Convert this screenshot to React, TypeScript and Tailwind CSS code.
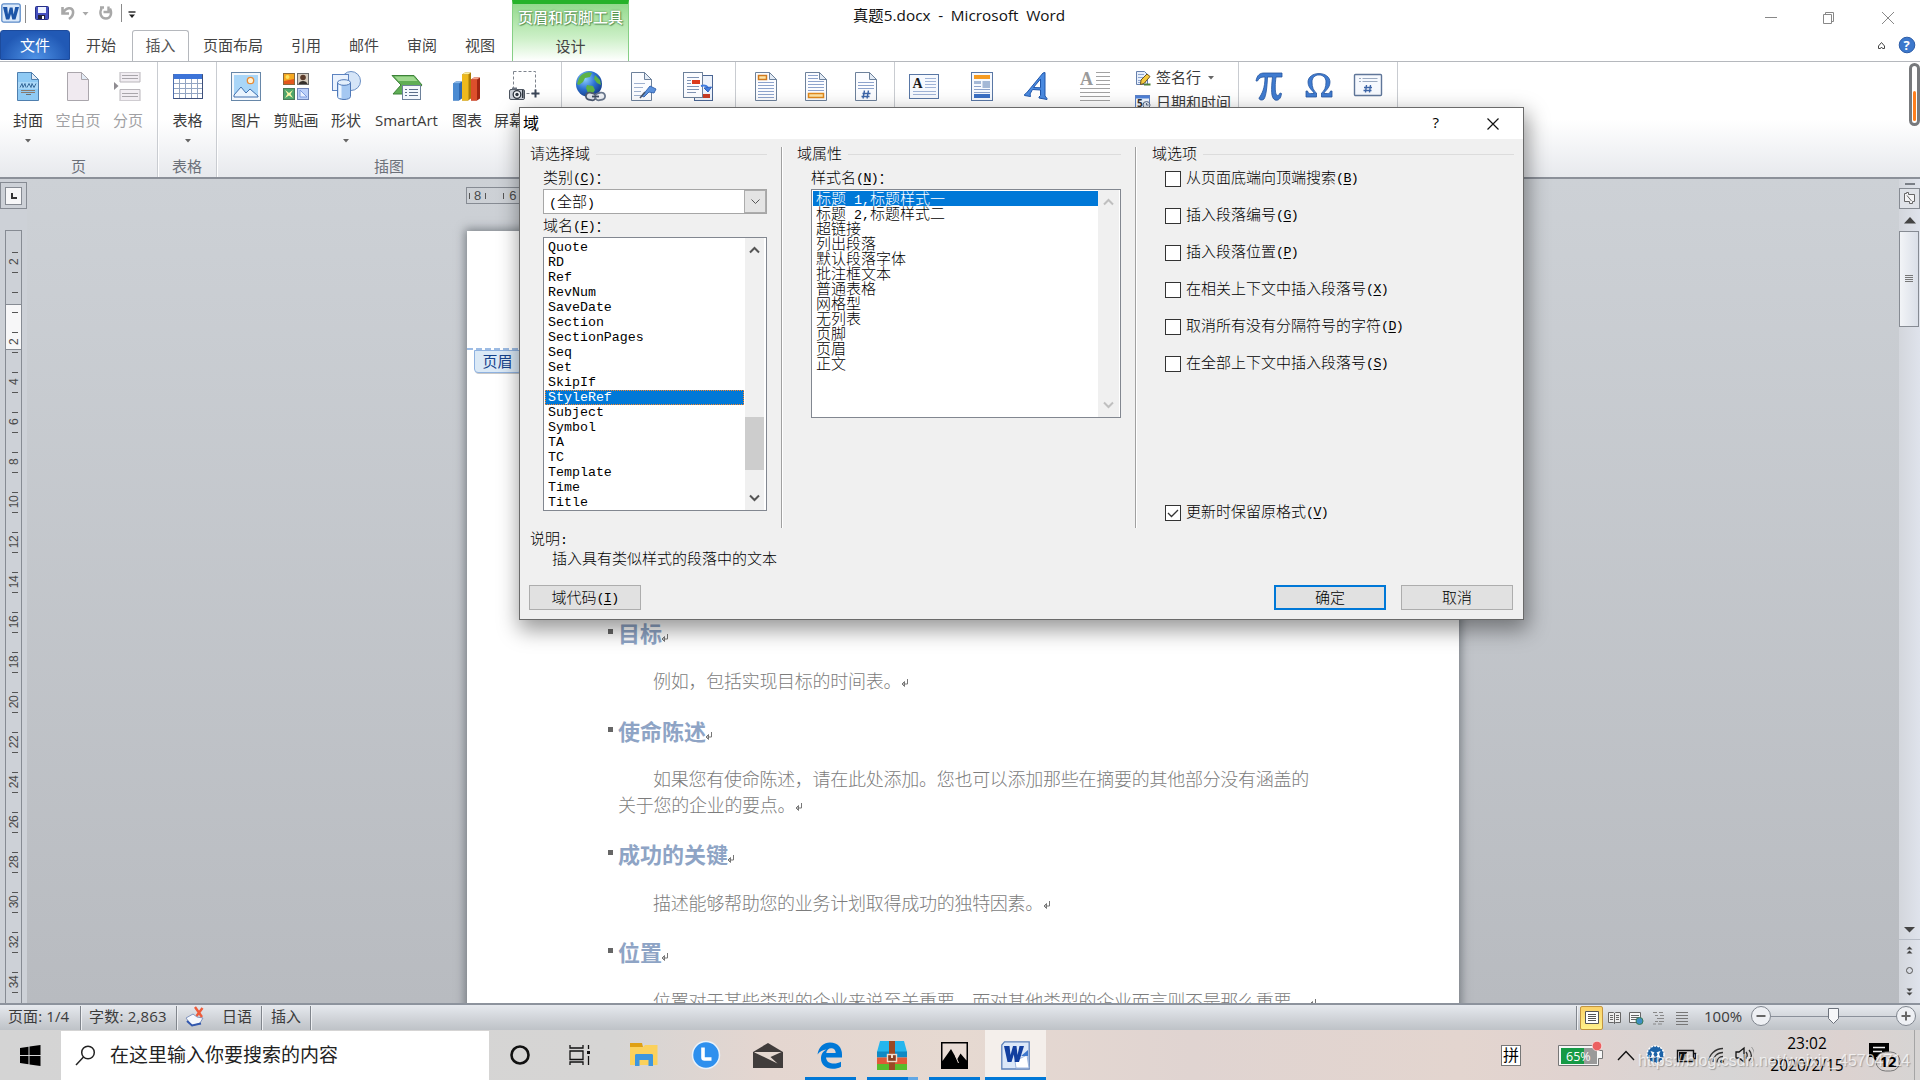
import React from "react";

const ui = "font-['Open_Sans','Noto_Sans_CJK_SC',sans-serif]";
const song = "font-['Noto_Sans_CJK_SC',sans-serif]";

/* ---------- ribbon icons (32 x 32) ---------- */

const Svg = ({ children, w = 32, h = 32, vb }: { children: React.ReactNode; w?: number; h?: number; vb?: string }) => (
  <svg width={w} height={h} viewBox={vb ?? `0 0 ${w} ${h}`} fill="none" className="shrink-0">
    {children}
  </svg>
);

const Sheet = ({ fill = "#fbfcff", stroke = "#6d819b" }: { fill?: string; stroke?: string }) => (
  <>
    <path d="M5.500 2.500h14l7 7v21h-21z" fill={fill} stroke={stroke} />
    <path d="M19.500 2.500v7h7z" fill="#e3ebf5" stroke={stroke} />
  </>
);

const CoverIcon = () => (
  <Svg>
    <Sheet fill="#8fcaf4" stroke="#4f7fae" />
    <rect x="6" y="12" width="20" height="7" fill="#a9d8f8" />
    <path d="M8 17.500l2-4 1 4 2-4 1 4M15 17.500l2-4 2 4 1-4 2 4 2-4" stroke="#3a6c9c" />
    <path d="M9 20.500h14M9 22.500h14" stroke="#8a7a6e" />
    <path d="M14 24.500h5" stroke="#6d6d6d" />
  </Svg>
);

const BlankIcon = () => (
  <Svg>
    <Sheet fill="#f0eaf0" stroke="#aaa6ac" />
  </Svg>
);

const BreakIcon = () => (
  <Svg>
    <path d="M8 2v10h20V2M8 31V19.500h20V31" fill="#f1edf2" stroke="#b9b6bb" />
    <path d="M8 2.500h20M8 30.500h20" stroke="#cfccd1" />
    <path d="M10 5.500h16M10 8.500h16M10 23.500h16M10 26.500h16" stroke="#a9a6ab" />
    <path d="M2 12l4.500 4L2 20z" fill="#8f8c91" />
  </Svg>
);

const TableIcon = () => (
  <Svg>
    <rect x="1.500" y="4.500" width="29" height="24" fill="#fff" stroke="#4f6fae" />
    <rect x="2" y="4" width="28" height="5" fill="#3c74d8" />
    <path d="M2 13.500h28M2 18.500h28M2 23.500h28M7.500 9v19M13.500 9v19M19.500 9v19M25.500 9v19" stroke="#93a5c2" />
    <path d="M1.500 28.500h29v-24" stroke="#3d4f7a" />
  </Svg>
);

const PictureIcon = () => (
  <Svg>
    <rect x="1.500" y="2.500" width="29" height="28" fill="#f4f8fc" stroke="#6787a8" />
    <rect x="4" y="5" width="24" height="22" fill="#a9d6f8" />
    <circle cx="20.500" cy="10.500" r="3.200" fill="#fff5d8" stroke="#e88b36" strokeWidth="1.300" />
    <path d="M4 25l7-8 5 6 4-4 8 7v1H4z" fill="#eaf4fd" stroke="#3f6fae" />
  </Svg>
);

const ClipArtIcon = () => (
  <Svg>
    <rect x="3.500" y="3.500" width="11" height="11" fill="#f6a821" stroke="#8a6a3c" />
    <path d="M4 11l10-2v5H4z" fill="#e2571d" />
    <circle cx="7.500" cy="7" r="2" fill="#ffe25e" />
    <rect x="17.500" y="3.500" width="11" height="11" fill="#d7cdbf" stroke="#6b6b6b" />
    <circle cx="23" cy="7.500" r="2.800" fill="#5d3d2c" />
    <path d="M18.500 14c1-4 8-4 9 0z" fill="#36302c" />
    <rect x="3.500" y="18.500" width="11" height="11" fill="#4fa66c" stroke="#4a7a57" />
    <path d="M5 20l4 3 4-3-2.500 4 2.500 4-4-2.500L5 28l2.500-4z" fill="#fff7a8" />
    <rect x="17.500" y="18.500" width="11" height="11" fill="#bcd0fa" stroke="#6f84b8" />
    <path d="M20 20l7 7h-7z" fill="#eaf1ff" stroke="#7e9be0" />
  </Svg>
);

const ShapesIcon = () => (
  <Svg>
    <circle cx="21" cy="11" r="9.500" fill="#d5e5f8" stroke="#6a8fc4" />
    <rect x="2.500" y="4.500" width="16" height="16" fill="#eaf2fd" stroke="#5d83c0" />
    <path d="M7.500 12.500v14c0 4 13 4 13 0v-14z" fill="#a5c8f2" stroke="#5079b8" />
    <path d="M10 14v14" stroke="#eef6ff" strokeWidth="3" />
    <ellipse cx="14" cy="12.500" rx="6.500" ry="2.800" fill="#e3effc" stroke="#5079b8" />
  </Svg>
);

const SmartArtIcon = () => (
  <Svg>
    <path d="M1 5.500h22l8 9.500-8 9H2l8-9z" fill="#5fae55" stroke="#3d8139" />
    <path d="M3.500 6.500h19l4 4.500H7.500z" fill="#9fd890" />
    <rect x="11.500" y="15.500" width="18" height="14" fill="#f4f8fd" stroke="#6d819b" />
    <path d="M14 19.500h2M14 22.500h2M14 25.500h2M18 19.500h9M18 22.500h9M18 25.500h9" stroke="#5c6f8a" />
  </Svg>
);

const ChartIcon = () => (
  <Svg>
    <path d="M2 13.500l3-2h6v17l-3 2H2z" fill="#2f68b0" />
    <path d="M2 13.500l3-2h6l-3 2z" fill="#8ab9ea" />
    <rect x="2" y="13.500" width="6" height="17" fill="#4b8bd2" />
    <path d="M11 4.500l3-2h6v26l-3 2h-6z" fill="#a87a08" />
    <path d="M11 4.500l3-2h6l-3 2z" fill="#fdf0a0" />
    <rect x="11" y="4.500" width="6.500" height="26" fill="#eeb91c" />
    <path d="M20 9.500l3-2h6v21l-3 2h-6z" fill="#9e2612" />
    <path d="M20 9.500l3-2h6l-3 2z" fill="#f8a58c" />
    <rect x="20" y="9.500" width="6" height="21" fill="#dd4f2c" />
  </Svg>
);

const ScreenshotIcon = () => (
  <Svg>
    <rect x="5.500" y="1.500" width="22" height="22" stroke="#7d838c" strokeDasharray="3 2" />
    <path d="M23.500 23.500h8M27.500 19.500v8" stroke="#3b4658" strokeWidth="2" />
    <rect x="1.500" y="19.500" width="15" height="10" rx="1.500" fill="#c9ced6" stroke="#4d545f" />
    <rect x="4" y="17.500" width="5" height="2" fill="#6d7480" />
    <circle cx="9" cy="24.500" r="3.800" fill="#f3f5f8" stroke="#2f3640" strokeWidth="1.300" />
    <circle cx="9" cy="24.500" r="1.700" fill="#2f3640" />
    <rect x="14" y="20" width="1.500" height="8" fill="#2f3640" />
  </Svg>
);

const GlobeIcon = () => (
  <Svg>
    <defs>
      <radialGradient id="sea" cx="0.35" cy="0.3" r="0.8">
        <stop offset="0" stopColor="#8fd0ff" />
        <stop offset="0.5" stopColor="#2d72d2" />
        <stop offset="1" stopColor="#11357e" />
      </radialGradient>
    </defs>
    <circle cx="14" cy="14" r="13" fill="url(#sea)" />
    <path d="M4 8c3-5 9-7 13-5l-2 4-5 1-2 4-4 3-2-1zM12 15l6 1 2 4-4 6-3-3-2-5zM20 5l5 5 1 5-4-2-3-4z" fill="#5cb247" />
    <rect x="11" y="23" width="10" height="7" rx="3.500" fill="#dfe4ec" stroke="#4d5a70" strokeWidth="1.800" transform="rotate(14 16 26)" />
    <rect x="20" y="23" width="10" height="7" rx="3.500" fill="#eef1f5" stroke="#6a788e" strokeWidth="1.800" transform="rotate(-14 25 26)" />
    <path d="M17 26.500h7" stroke="#3f4c61" strokeWidth="1.800" />
  </Svg>
);

const BookmarkIcon = () => (
  <Svg>
    <path d="M4.500 2.500h13l7 7v21h-20z" fill="#fbfcff" stroke="#6d819b" />
    <path d="M17.500 2.500v7h7z" fill="#e3ebf5" stroke="#6d819b" />
    <path d="M7 13.500h11M7 17.500h9M7 21.500h7M7 25.500h10" stroke="#9fb1cf" />
    <path d="M15 26l8-10 6 3-2 4-5-1-5 5z" fill="#5c92dd" stroke="#3a69b4" />
    <path d="M13 28l5-6" stroke="#49566d" strokeWidth="1.500" />
  </Svg>
);

const CrossRefIcon = () => (
  <Svg>
    <rect x="12.500" y="5.500" width="18" height="25" fill="#eef3fb" stroke="#4b6694" />
    <rect x="1.500" y="2.500" width="19" height="25" fill="#fbfcff" stroke="#6d819b" />
    <path d="M5 7.500h12M5 10.500h4M5 13.500h4M5 16.500h12M5 19.500h12M5 22.500h9" stroke="#8094b4" />
    <rect x="10" y="10" width="8" height="4" fill="#dc3b1c" />
    <rect x="21" y="24" width="7" height="4" fill="#c83b22" />
    <path d="M19 16c4-1 7 0 7 3" stroke="#3f7ce0" strokeWidth="2" />
    <path d="M22 18l4 4 3.500-5z" fill="#3f7ce0" stroke="#2f62c0" />
  </Svg>
);

const HeaderIcon = () => (
  <Svg>
    <Sheet />
    <path d="M8 12.500h16M8 15.500h16M8 18.500h16M8 21.500h16M8 24.500h16M8 27.500h16" stroke="#8da3cc" />
    <rect x="8.500" y="5.500" width="8" height="4" fill="#fde3a6" stroke="#d07a1e" strokeWidth="1.500" />
  </Svg>
);

const FooterIcon = () => (
  <Svg>
    <Sheet />
    <path d="M8 5.500h10M8 8.500h10M8 11.500h16M8 14.500h16M8 17.500h16M8 20.500h16" stroke="#8da3cc" />
    <rect x="8.500" y="23.500" width="15" height="4" fill="#fde3a6" stroke="#e0891e" strokeWidth="1.500" />
  </Svg>
);

const PageNoIcon = () => (
  <Svg>
    <Sheet />
    <path d="M8 12.500h16M8 15.500h16M8 18.500h16" stroke="#8da3cc" />
    <path d="M14.500 20.500l-1.500 8M18.500 20.500l-1.500 8M12.500 23.500h8M11.500 26.500h8" stroke="#3e66a8" strokeWidth="1.400" />
  </Svg>
);

const TextBoxIcon = () => (
  <Svg>
    <rect x="1.500" y="4.500" width="29" height="24" fill="#f6f9fe" stroke="#5977a5" />
    <text x="4.500" y="18" className="font-['Liberation_Serif',serif] font-bold" fontSize="14" fill="#1a1a1a">A</text>
    <path d="M17 8.500h11M17 11.500h11M17 14.500h11M17 17.500h11M5 21.500h23M5 24.500h23" stroke="#9fb3d6" />
  </Svg>
);

const PartsIcon = () => (
  <Svg>
    <rect x="5.500" y="2.500" width="21" height="28" fill="#f6f9fe" stroke="#5977a5" />
    <rect x="8" y="5" width="16" height="4" fill="#f59b22" />
    <rect x="8" y="11" width="7" height="3" fill="#a4b8d6" />
    <rect x="16.500" y="11" width="7.500" height="7" fill="#a4b8d6" />
    <path d="M8 16.500h7M8 19.500h16M8 22.500h16" stroke="#8da3cc" />
    <rect x="8" y="24" width="16" height="4" fill="#3a6fc4" />
  </Svg>
);

const WordArtIcon = () => (
  <Svg>
    <path d="M24 2.500v23.500l2 2.500v1l-8-1.500v-1l1.500-1.500V20l-8-.5-2.500 4.500.5 1.500v1l-6-1v-1l2-1.500L22 3zM19.500 9l-7 8.500 7 .3z" fill="#4a8ae0" stroke="#1f56ab" />
  </Svg>
);

const DropCapIcon = () => (
  <Svg>
    <text x="1" y="15" className="font-['Liberation_Serif',serif] font-bold" fontSize="18" fill="#9a9a9a">A</text>
    <path d="M17 2.500h14M17 6.500h14M17 10.500h14M17 14.500h14M1 18.500h30M1 22.500h30M1 26.500h30M1 30.500h30" stroke="#a2a2a2" />
  </Svg>
);

const FieldBoxIcon = () => (
  <Svg>
    <rect x="2.500" y="4.500" width="27" height="21" rx="1" fill="#f6f9fe" stroke="#5f7699" strokeWidth="1.400" />
    <path d="M7 8.500h2M7 11.500h2M10.500 8.500h15M10.500 11.500h15" stroke="#9aa9c0" />
    <path d="M14.500 15l-1 7.500M18.500 15l-1 7.500M12 17.500h8M11.500 20.500h8" stroke="#3e66a8" strokeWidth="1.400" />
  </Svg>
);

/* ---------- ribbon ---------- */

type BigProps = { icon: React.ReactNode; label?: string; w: string; arrow?: boolean; dim?: boolean };

const BigButton = ({ icon, label, w, arrow, dim }: BigProps) => (
  <div className={`flex shrink-0 flex-col items-center pt-[8px] ${w}`}>
    {icon}
    <span className={`mt-[9px] h-[18px] whitespace-nowrap text-[15px] leading-[18px] ${dim ? "text-[#a0a0a3]" : "text-[#3b3b3b]"}`}>
      {label}
    </span>
    {arrow && <Down className="mt-[10px] text-[#666]" />}
  </div>
);

const Down = ({ className = "" }: { className?: string }) => (
  <svg width="6" height="4" viewBox="0 0 6 4" className={`shrink-0 ${className}`}>
    <path d="M0 0h6L3 3.500z" fill="currentColor" />
  </svg>
);

const Group = ({ w, pl, label, children }: { w: string; pl?: string; label?: string; children: React.ReactNode }) => (
  <div className={`flex shrink-0 flex-col border-r border-[#c9ccd1] shadow-[1px_0_0_#fff] ${w}`}>
    <div className={`flex h-[94px] ${pl ?? ""}`}>{children}</div>
    <div className="text-center text-[15px] leading-[20px] text-[#6b7079]">{label}</div>
  </div>
);

const Ribbon = () => (
  <div className="flex h-[117px] shrink-0 border-b-2 border-[#8b9099] bg-gradient-to-b from-white from-50% to-[#e7e9ed]">
    <Group w="w-[158px]" pl="pl-[3px]" label="页">
      <BigButton w="w-[50px]" icon={<CoverIcon />} label="封面" arrow />
      <BigButton w="w-[50px]" icon={<BlankIcon />} label="空白页" dim />
      <BigButton w="w-[50px]" icon={<BreakIcon />} label="分页" dim />
    </Group>
    <Group w="w-[59px]" label="表格">
      <BigButton w="w-[59px]" icon={<TableIcon />} label="表格" arrow />
    </Group>
    <Group w="w-[345px]" pl="pl-[4px]" label="插图">
      <BigButton w="w-[50px]" icon={<PictureIcon />} label="图片" />
      <BigButton w="w-[50px]" icon={<ClipArtIcon />} label="剪贴画" />
      <BigButton w="w-[50px]" icon={<ShapesIcon />} label="形状" arrow />
      <BigButton w="w-[71px]" icon={<SmartArtIcon />} label="SmartArt" />
      <BigButton w="w-[50px]" icon={<ChartIcon />} label="图表" />
      <BigButton w="w-[64px]" icon={<ScreenshotIcon />} label="屏幕截图" />
    </Group>
    <Group w="w-[174px]" pl="pl-[3px]">
      <BigButton w="w-[52px]" icon={<GlobeIcon />} />
      <BigButton w="w-[52px]" icon={<BookmarkIcon />} />
      <BigButton w="w-[58px]" icon={<CrossRefIcon />} />
    </Group>
    <Group w="w-[159px]" pl="pl-[5px]">
      <BigButton w="w-[50px]" icon={<HeaderIcon />} />
      <BigButton w="w-[50px]" icon={<FooterIcon />} />
      <BigButton w="w-[50px]" icon={<PageNoIcon />} />
    </Group>
    <Group w="w-[344px]">
      <BigButton w="w-[58px]" icon={<TextBoxIcon />} />
      <BigButton w="w-[58px]" icon={<PartsIcon />} />
      <BigButton w="w-[52px]" icon={<WordArtIcon />} />
      <BigButton w="w-[64px]" icon={<DropCapIcon />} />
      <div className="flex flex-col pl-[8px] pt-[3px] text-[15px] text-[#3b3b3b]">
        <div className="flex h-[25px] items-center gap-[5px]">
          <svg width="16" height="16" viewBox="0 0 16 16">
            <path d="M1.500 1.500h8l3 3v10h-11z" fill="#e6eefb" stroke="#6580ad" />
            <path d="M3 4.500h6M3 7.500h7M3 10.500h4M3 12.500h8" stroke="#8fa6cf" />
            <path d="M6 10l6-6 3 2.500-6 7-3.500 1z" fill="#f4c83e" stroke="#6b531c" />
            <path d="M9 14.500h6.500" stroke="#4f7f3a" strokeWidth="2" />
          </svg>
          <span>签名行</span>
          <Down className="ml-[2px] text-[#666]" />
        </div>
        <div className="flex h-[25px] items-center gap-[5px] whitespace-nowrap">
          <svg width="16" height="16" viewBox="0 0 16 16" className="mb-[2px]">
            <rect x="0.500" y="1.500" width="14" height="13" fill="#f4f8ff" stroke="#5d83c8" />
            <rect x="1" y="2" width="13" height="2.500" fill="#4f81d8" />
            <text x="2" y="13" fontSize="10" className="font-bold" fill="#333">5</text>
            <circle cx="11.500" cy="11" r="3.500" fill="#e3eaf5" stroke="#5a6b88" />
            <path d="M11.500 9v2h2" fill="none" stroke="#5a6b88" />
          </svg>
          <span>日期和时间</span>
        </div>
      </div>
    </Group>
    <Group w="w-[159px]" pl="pl-[5px]">
      <BigButton
        w="w-[50px]"
        icon={
          <Svg>
            <path d="M3 11c1-6 4-8 8-8h18v4h-6c-1 7-1 14 0 17 1 2 3 2 4-1l1.500.5C28 29 25 31 22 30c-4-2-4-10-2.500-23h-5C14 18 13 26 11 29c-1 1.500-5 1.500-5-1 3-4 6-10 6-21h-1C8 7 6 8 4.500 11z" fill="#3f7bd0" stroke="#27579f" strokeWidth="0.800" />
          </Svg>
        }
      />
      <BigButton
        w="w-[50px]"
        icon={
          <Svg>
            <path d="M3 21h1.500c.5 2 1.500 2.500 3 2.500H11c0-2-6-5-6-11.500C5 7 10 3.500 16 3.500S27 7 27 12c0 6.500-6 9.500-6 11.500h3.500c1.500 0 2.500-.5 3-2.500H29v6H18.500v-4c3-2 4.500-6 4.500-11 0-4.500-3-7-7-7s-7 2.500-7 7c0 5 1.500 9 4.500 11v4H3z" fill="#3f7bd0" stroke="#27579f" strokeWidth="0.800" />
          </Svg>
        }
      />
      <BigButton w="w-[48px]" icon={<FieldBoxIcon />} />
    </Group>
    <div className="ml-auto mt-px h-[63px] w-[11px] rounded-full border-[3px] border-[#77797c] bg-white px-px pb-[2px] pt-[25px]">
      <div className="h-full w-[3px] rounded-full bg-[#ff7f1e]" />
    </div>
  </div>
);

/* ---------- title bar and tabs ---------- */

const WordLogo = ({ size = 20 }: { size?: number }) => (
  <svg width={size} height={size} viewBox="0 0 20 20">
    <rect x="0.800" y="0.800" width="18.400" height="18.400" rx="2" fill="#dbe9fa" stroke="#5c8bc8" strokeWidth="1.300" />
    <path d="M2 4h4.200l.8 7.500L8.800 4.500h2.800l1 7L14.200 4H18l-3.500 12.500h-3.200L10 11l-1.700 5.500H5z" fill="#1d55a8" />
  </svg>
);

const tabs = [
  { label: "开始", w: "w-[62px]" },
  { label: "插入", w: "w-[57px]", active: true },
  { label: "页面布局", w: "w-[88px]" },
  { label: "引用", w: "w-[58px]" },
  { label: "邮件", w: "w-[58px]" },
  { label: "审阅", w: "w-[58px]" },
  { label: "视图", w: "w-[58px]" },
];

const TitleArea = () => (
  <div className="flex h-[62px] shrink-0 border-b border-[#b5b8bd] bg-white">
    <div className="flex w-[512px] flex-col">
      <div className="flex h-[31px] items-start pl-[1px] pt-[3px]">
        <WordLogo />
        <div className="ml-[4px] mt-[2px] h-[18px] w-px bg-[#8a8a8a]" />
        <svg width="104" height="20" viewBox="0 0 104 20" fill="none" className="ml-[8px]">
          <rect x="1.500" y="3.500" width="13" height="13" rx="1" fill="#4650c0" stroke="#262f87" />
          <rect x="4" y="4" width="8" height="6" fill="#eef3ff" />
          <rect x="4" y="12" width="7" height="4" fill="#23233a" />
          <rect x="8" y="13" width="2" height="3" fill="#fff" />
          <path d="M28.500 4v6.500h6.500M29 10c3-6 9-6 10-2 .6 3-1 6-4 8" stroke="#a8a8a8" strokeWidth="2.600" />
          <path d="M48.500 9h6l-3 3.500z" fill="#a8a8a8" />
          <path d="M70 4.500h-4M74.500 3.500v5.500h-5M67.500 5.500c-2.500 4.500-.5 10 4.500 10 4.500 0 6.500-5 4-10" stroke="#a8a8a8" strokeWidth="2.400" />
          <path d="M87.500 1v18" stroke="#8a8a8a" />
          <path d="M94.500 9h7" stroke="#222" strokeWidth="1.400" />
          <path d="M95 11.500h6l-3 3.500z" fill="#222" />
        </svg>
      </div>
      <div className="flex h-[31px] text-[15px] leading-[29px] text-[#444]">
        <div className="h-[30px] w-[70px] rounded-t-[3px] border border-[#1d4b9c] bg-[radial-gradient(ellipse_at_bottom,#4f93e6,#2159b5_70%)] text-center text-white">
          文件
        </div>
        {tabs.map((t) => (
          <div
            key={t.label}
            className={`text-center ${t.w} ${t.active ? "h-[31px] rounded-t-[3px] border border-b-0 border-[#b5b8bd] bg-white text-[#555]" : "pt-px"}`}
          >
            {t.label}
          </div>
        ))}
      </div>
    </div>
    <div className="flex h-[61px] w-[117px] flex-col items-center border-x border-[#86cf85] border-t-[4px] border-t-[#26b22a] bg-gradient-to-b from-[#93d98d] via-[#cdf0c8] via-60% to-white">
      <div className="mt-[2px] whitespace-nowrap text-[15px] font-medium leading-[22px] text-white [text-shadow:0_0_2px_#3f7d3d,1px_1px_1px_#5f9a5d]">页眉和页脚工具</div>
      <div className="mt-[7px] text-[15px] leading-[22px] text-[#444]">设计</div>
    </div>
    <div className="flex flex-1 justify-between">
      <div className="ml-[224px] mt-[4px] whitespace-pre text-[15.300px] leading-[22px] tracking-[0.05px] [word-spacing:3.5px] text-[#111]">
        真题5.docx - Microsoft Word
      </div>
      <div className="flex w-[180px] flex-col">
        <svg width="180" height="34" viewBox="0 0 180 34" fill="none" stroke="#888">
          <path d="M25 17.500h12M142 12l12 12M154 12l-12 12" />
          <path d="M83.500 14.500h8v9h-8zM85.500 14v-1.500h8v9H92" />
        </svg>
        <svg width="180" height="26" viewBox="0 34 180 26" fill="none">
          <path d="M138.500 46l3-3.500 3 3.500v2.500h-2l-1-1.500-1 1.500h-2z" stroke="#444" />
          <circle cx="167" cy="45" r="7.800" fill="#3c78cc" stroke="#2c5da8" />
          <text x="163.500" y="50" fontSize="13" className="font-bold" fill="#fff">?</text>
        </svg>
      </div>
    </div>
  </div>
);

/* ---------- document area ---------- */

const marks = ["2", "", "", "", "2", "", "4", "", "6", "", "8", "", "10", "", "12", "", "14", "", "16", "", "18", "", "20", "", "22", "", "24", "", "26", "", "28", "", "30", "", "32", "", "34", ""];

const LeftRuler = () => (
  <div className="flex w-[27px] shrink-0 flex-col bg-[#cdd1d7]">
    <div className="mt-[3px] flex h-[27px] items-center justify-center border border-[#868b93]">
      <div className="flex h-[18px] w-[17px] items-center justify-center border border-[#868b93] bg-[#f7f7f8]">
        <div className="h-[6px] w-[6px] border-b-2 border-l-2 border-[#333]" />
      </div>
    </div>
    <div className="relative ml-[5px] mt-[21px] w-[17px] flex-1 overflow-hidden border border-b-0 border-[#868b93] pt-[21px]">
      <div className="absolute inset-x-0 top-[73px] h-[46px] border-y border-[#868b93] bg-[#f7f7f8]" />
      {marks.map((m, i) => (
        <div key={i} className="relative flex h-[20px] flex-col items-center">
          <div className="ml-[2px] h-px w-[6px] bg-[#555]" />
          <span className="mt-[1px] flex h-[16px] w-[16px] -rotate-90 items-center justify-center font-['Liberation_Sans',sans-serif] text-[12px] tracking-[-0.5px] text-[#4a4a4a]">
            {m}
          </span>
        </div>
      ))}
    </div>
  </div>
);

const Ret = ({ pull = "ml-[-1px]" }: { pull?: string }) => (
  <svg width="9" height="11" viewBox="0 0 9 11" fill="none" className={`mb-[3px] inline-block align-bottom ${pull}`}>
    <path d="M7.500 1v5h-5M4.500 3.500L2 6l2.500 2.500z" stroke="#777" />
  </svg>
);

const Heading = ({ children, mt }: { children: string; mt: string }) => (
  <div className={`flex h-[30px] text-[22px] font-bold leading-[26px] text-[#8ea4c5] ${mt}`}>
    <span className="mr-[5px] mt-[10px] h-[5px] w-[5px] bg-[#666]" />
    {children}
    <span className="flex items-end pb-[2px]"><Ret pull="ml-[-2px]" /></span>
  </div>
);

const Para = ({ children, indent = true, end = true }: { children: string; indent?: boolean; end?: boolean }) => (
  <div className={`h-[26px] whitespace-nowrap text-[18px] font-light leading-[24px] tracking-[-0.27px] text-[#7c7c7c] ${indent ? "pl-[45px]" : "pl-[10px]"}`}>
    {children}
    {end && <Ret />}
  </div>
);

const Page = () => (
  <div className={`ml-[440px] mt-[27px] h-[790px] w-[992px] shrink-0 bg-white shadow-[0_0_9px_2px_rgba(70,76,84,0.6)] ${song}`}>
    <div className="h-[117px]" />
    <div className="h-[2px] w-full bg-[repeating-linear-gradient(90deg,#9dbce4_0_6px,transparent_6px_9px)]" />
    <div className="ml-[7px] flex h-[23px] w-[48px] items-center justify-center rounded-b-[4px] border border-[#8fb2e0] bg-[#dbe9f6] pb-px pr-px text-[15px] text-[#15428b] shadow-[1px_1px_0_#c8c8c8]">
      页眉
    </div>
    <div className="ml-[141px]">
      <Heading mt="mt-[246px]">目标</Heading>
      <div className="h-[19px]" />
      <Para>例如，包括实现目标的时间表。</Para>
      <Heading mt="mt-[23px]">使命陈述</Heading>
      <div className="h-[19px]" />
      <Para end={false}>如果您有使命陈述，请在此处添加。您也可以添加那些在摘要的其他部分没有涵盖的</Para>
      <Para indent={false}>关于您的企业的要点。</Para>
      <Heading mt="mt-[22px]">成功的关键</Heading>
      <div className="h-[20px]" />
      <Para>描述能够帮助您的业务计划取得成功的独特因素。</Para>
      <Heading mt="mt-[22px]">位置</Heading>
      <div className="h-[20px]" />
      <Para>位置对于某些类型的企业来说至关重要，而对其他类型的企业而言则不是那么重要。</Para>
    </div>
  </div>
);

const ScrollColumn = () => (
  <div className="flex w-[21px] shrink-0 flex-col items-center bg-gradient-to-r from-[#d3d6dc] to-[#dfe3ec] pt-[4px]">
    <div className="h-[2px] w-[10px] bg-[#7a7f87]" />
    <div className="mt-[3px] flex h-[21px] w-full items-center justify-center border border-[#868b93] bg-[#dfe2e8]">
      <svg width="13" height="13" viewBox="0 0 13 13" fill="#f4f4f6" stroke="#666">
        <path d="M1.500 1.500h2v-1h2v2h6v7h-2v2h-3v-2h-5zM4 3.500l4.500 5.500" />
      </svg>
    </div>
    <svg width="12" height="7" viewBox="0 0 12 7" className="mt-[8px]"><path d="M0 6.500h12L6 0z" fill="#444" /></svg>
    <div className="mr-px mt-[7px] flex h-[96px] w-[20px] items-center justify-center border border-[#868b93] bg-gradient-to-r from-[#f2f4f7] to-[#dadfe8]">
      <div className="h-[8px] w-[8px] bg-[repeating-linear-gradient(180deg,#777_0_1px,transparent_1px_2px)]" />
    </div>
    <div className="flex-1" />
    <svg width="21" height="77" viewBox="0 0 21 77" fill="none">
      <path d="M5 1h11l-5.500 5.500z" fill="#444" />
      <path d="M0 13.500h21" stroke="#b7bcc6" />
      <path d="M7.500 23.500l3-3 3 3zM7.500 27.500l3-3 3 3z" fill="#444" />
      <circle cx="10.500" cy="44.500" r="3" stroke="#555" />
      <path d="M7.500 62.500l3 3 3-3zM7.500 66.500l3 3 3-3z" fill="#444" />
    </svg>
  </div>
);

/* ---------- field dialog ---------- */

const L = ({ children, u = false }: { children: string; u?: boolean }) => (
  <span className={`font-['Liberation_Mono',monospace] text-[13.300px] leading-none ${u ? "underline underline-offset-2" : ""}`}>{children}</span>
);

const Key = ({ k }: { k: string }) => (
  <span className="inline-block -translate-y-px leading-none tracking-[-0.6px]">
    <L>(</L>
    <L u>{k}</L>
    <L>)</L>
  </span>
);

const fields = ["Quote", "RD", "Ref", "RevNum", "SaveDate", "Section", "SectionPages", "Seq", "Set", "SkipIf", "StyleRef", "Subject", "Symbol", "TA", "TC", "Template", "Time", "Title"];

const styleNames: React.ReactNode[] = [
  <>标题<L> 1,</L>标题样式一</>,
  <>标题<L> 2,</L>标题样式二</>,
  "超链接",
  "列出段落",
  "默认段落字体",
  "批注框文本",
  "普通表格",
  "网格型",
  "无列表",
  "页脚",
  "页眉",
  "正文",
];

const options = [
  ["从页面底端向顶端搜索", "B"],
  ["插入段落编号", "G"],
  ["插入段落位置", "P"],
  ["在相关上下文中插入段落号", "X"],
  ["取消所有没有分隔符号的字符", "D"],
  ["在全部上下文中插入段落号", "S"],
];

const Chevron = ({ up, color }: { up?: boolean; color: string }) => (
  <svg width="11" height="8" viewBox="0 0 11 8" fill="none">
    <path d={up ? "M1 6.500l4.500-4.500L10 6.500" : "M1 1.500L5.500 6 10 1.500"} stroke={color} strokeWidth="2" />
  </svg>
);

const Legend = ({ children }: { children: string }) => (
  <div className="flex h-[20px] items-center gap-[6px]">
    <span className="leading-[20px] -mt-[2px]">{children}</span>
    <div className="mt-px h-px flex-1 bg-[#dcdcdc]" />
  </div>
);

const Check = ({ text, k, on }: { text: string; k: string; on?: boolean }) => (
  <div className="flex h-[16px] items-center">
    <div className="mr-[5px] flex h-[16px] w-[16px] items-center justify-center border border-[#333] bg-white">
      {on && (
        <svg width="12" height="9" viewBox="0 0 12 9" fill="none"><path d="M1 4l3.500 3.500L11 1" stroke="#333" strokeWidth="1.300" /></svg>
      )}
    </div>
    <span className="-mt-[2px] whitespace-nowrap leading-[16px]">{text}<Key k={k} /></span>
  </div>
);

const FieldDialog = () => (
  <div className={`absolute left-[519px] top-[107px] flex h-[513px] w-[1005px] flex-col border border-[#6a6a6a] bg-[#f0f0f0] text-[15px] font-light text-black shadow-[2px_8px_20px_2px_rgba(0,0,0,0.4)] ${song}`}>
    <div className="flex h-[31px] shrink-0 items-center bg-white pl-[3px] text-[16px] font-normal">
      <span className="-mt-[3px] flex-1">域</span>
      <span className="-mt-[2px] font-['Open_Sans',sans-serif] text-[15px]">?</span>
      <svg width="12" height="12" viewBox="0 0 12 12" className="ml-[48px] mr-[24px]">
        <path d="M0.500 0.500l11 11M11.500 0.500l-11 11" stroke="#111" strokeWidth="1.200" />
      </svg>
    </div>
    <div className="mt-[8px] flex h-[381px]">
      <div className="flex w-[262px] flex-col border-r border-[#a0a0a0] pl-[10px] pr-[14px] shadow-[1px_0_0_#fff]">
        <div className="-mt-[3px]"><Legend>请选择域</Legend></div>
        <div className="ml-[13px] flex flex-col">
          <div className="mt-[3px] h-[21px] leading-[20px]">类别<Key k="C" />：</div>
          <div className="mt-[1px] flex h-[25px] border border-[#a6a6a6] bg-white">
            <span className="flex-1 pl-[5px] leading-[21px]"><L>(</L>全部<L>)</L></span>
            <div className="flex w-[22px] items-center justify-center border border-[#acacac] bg-[#e4e4e4]">
              <svg width="9" height="6" viewBox="0 0 9 6" fill="none"><path d="M0.500 0.500l4 4 4-4" stroke="#555" /></svg>
            </div>
          </div>
          <div className="mt-[1px] h-[21px] leading-[20px]">域名<Key k="F" />：</div>
          <div className="mt-[1px] flex h-[274px] border border-[#828790] bg-white">
            <div className="flex-1 overflow-hidden pl-px pt-[2px]">
              {fields.map((f) => (
                <div
                  key={f}
                  className={`flex h-[15px] items-center pl-[3px] font-normal leading-[15px] ${f === "StyleRef" ? "mr-px bg-[#0078d7] text-white outline-1 -outline-offset-1 outline-dotted outline-[#ff8728]" : ""}`}
                >
                  <L>{f}</L>
                </div>
              ))}
            </div>
            <div className="mr-[2px] flex w-[19px] flex-col items-center bg-[#f0f0f0] pb-[8px] pt-[8px]">
              <Chevron up color="#555" />
              <div className="mt-[163px] h-[53px] w-full bg-[#cdcdcd]" />
              <div className="flex-1" />
              <Chevron color="#555" />
            </div>
          </div>
        </div>
      </div>
      <div className="flex w-[354px] flex-col border-r border-[#a0a0a0] pl-[15px] pr-[14px] shadow-[1px_0_0_#fff]">
        <div className="-mt-[3px]"><Legend>域属性</Legend></div>
        <div className="ml-[14px] flex flex-col">
          <div className="mt-[3px] h-[21px] leading-[20px]">样式名<Key k="N" />：</div>
          <div className="mt-[1px] flex h-[229px] border border-[#828790] bg-white">
            <div className="flex-1 pl-px pt-[1px]">
              {styleNames.map((s, i) => (
                <div key={i} className={`h-[15px] whitespace-pre pl-[3px] leading-[13px] ${i === 0 ? "bg-[#0078d7] text-white" : ""}`}>
                  {s}
                </div>
              ))}
            </div>
            <div className="mr-px flex w-[21px] flex-col items-center justify-between bg-[#f0f0f0] py-[8px]">
              <Chevron up color="#bfbfbf" />
              <Chevron color="#bfbfbf" />
            </div>
          </div>
        </div>
      </div>
      <div className="flex flex-1 flex-col pl-[16px] pr-[9px]">
        <div className="-mt-[3px]"><Legend>域选项</Legend></div>
        <div className="ml-[13px] mt-[7px] flex flex-col gap-[21px]">
          {options.map(([text, k]) => <Check key={k} text={text} k={k} />)}
        </div>
        <div className="ml-[13px] mt-[133px]"><Check text="更新时保留原格式" k="V" on /></div>
      </div>
    </div>
    <div className="ml-[10px] h-[20px] leading-[20px]">说明<L>:</L></div>
    <div className="ml-[32px] h-[20px] leading-[20px]">插入具有类似样式的段落中的文本</div>
    <div className="ml-[9px] mr-[10px] mt-[17px] flex h-[25px] text-center leading-[22px]">
      <div className="w-[112px] border border-[#adadad] bg-[#e1e1e1]">域代码<Key k="I" /></div>
      <div className="ml-auto w-[112px] border-2 border-[#0078d7] bg-[#e1e1e1] leading-[20px]">确定</div>
      <div className="ml-[15px] w-[112px] border border-[#adadad] bg-[#e1e1e1]">取消</div>
    </div>
  </div>
);

/* ---------- status bar ---------- */

const Sep = () => <div className="h-[24px] w-px shrink-0 bg-[#80858c] shadow-[1px_0_0_#eef0f3]" />;

const StatusBar = () => (
  <div className="flex h-[27px] shrink-0 items-center border-t-2 border-[#8d939d] bg-gradient-to-b from-[#e6e9ee] to-[#bec2c7] text-[15px] text-[#3b3b3b]">
    <span className="mb-[2px] w-[80px] whitespace-nowrap pl-[8px] tracking-[0.1px]">页面: 1/4</span>
    <Sep />
    <span className="mb-[2px] w-[95px] whitespace-nowrap pl-[8px] tracking-[0.2px]">字数: 2,863</span>
    <Sep />
    <svg width="22" height="22" viewBox="0 0 22 22" fill="none" className="mb-px ml-[7px]">
      <path d="M2 12l7-4 4 3 6 1-3 5-8 3z" fill="#f5f8fd" stroke="#8296c0" />
      <path d="M3 15l5 4.500 9-2" stroke="#3258ae" strokeWidth="2" />
      <path d="M11 1l7 10M18.500 2l-6 8" stroke="#ee5b3a" strokeWidth="2.400" />
    </svg>
    <span className="mb-[2px] ml-[16px] w-[39px]">日语</span>
    <Sep />
    <span className="mb-[2px] w-[48px] pl-[9px]">插入</span>
    <Sep />
    <div className="flex-1" />
    <Sep />
    <div className="ml-[3px] flex h-[24px] w-[23px] items-center justify-center rounded-[2px] border border-[#c39540] bg-gradient-to-b from-[#fbd268] to-[#fff08a]">
      <svg width="14" height="14" viewBox="0 0 14 14" fill="#fff" stroke="#555"><path d="M0.500 0.500h13v12h-13zM3 3.500h8M3 5.500h8M3 7.500h8M3 9.500h8" /></svg>
    </div>
    <svg width="82" height="14" viewBox="0 0 82 14" fill="none" stroke="#666" className="ml-[5px]">
      <path d="M0.500 1.500h5l1 1 1-1h5v10h-5l-1 1-1-1h-5zM6.500 2v11M2 4.500h3M2 6.500h3M2 8.500h3M8 4.500h3M8 6.500h3M8 8.500h3" fill="#eee" />
      <path d="M21.500 1.500h11v10h-11zM23 4.500h8M23 6.500h8M23 8.500h5" fill="#f8f8f8" />
      <circle cx="31.500" cy="10" r="3.500" fill="#3e8fc4" stroke="#3a7a52" />
      <path d="M45 1.500h4M51 1.500h4M47 4.500h3M52 4.500h4M49 7.500h7M47 10.500h3M51 10.500h5M45 13h3M50 13h4" stroke="#888" />
      <path d="M68 1.500h12M68 4.500h12M68 7.500h12M68 10.500h12M68 13.500h12" stroke="#777" />
    </svg>
    <span className="mb-[2px] ml-[14px] w-[47px] text-[15px]">100%</span>
    <svg width="169" height="24" viewBox="0 0 169 24" fill="none" className="mb-[3px]">
      <path d="M20 12.500h128" stroke="#8a909a" />
      <circle cx="10" cy="12" r="9.500" fill="#eef0f4" stroke="#80868f" />
      <path d="M5.500 12h9" stroke="#666" strokeWidth="2" />
      <path d="M77.500 4.500h10v10l-5 5-5-5z" fill="#f6f7f9" stroke="#6c727c" />
      <circle cx="155" cy="12" r="9.500" fill="#eef0f4" stroke="#80868f" />
      <path d="M150.500 12h9M155 7.500v9" stroke="#666" strokeWidth="2" />
    </svg>
  </div>
);

/* ---------- taskbar ---------- */

const App_ = ({ w, bar, children, active }: { w: string; bar?: string; active?: boolean; children: React.ReactNode }) => (
  <div className={`flex h-[50px] shrink-0 flex-col items-center ${w} ${active ? "bg-[#f4efeb]" : ""}`}>
    <div className="flex h-[47px] items-center pt-[3px]">{children}</div>
    {bar && <div className={`h-[3px] bg-[#0078d7] ${bar}`} />}
  </div>
);

const Taskbar = () => (
  <div className="flex h-[50px] shrink-0 items-center bg-[linear-gradient(90deg,#d4d4d4_0%,#d6d5d4_32%,#e4d6d0_40%,#e6d9d1_50%,#e0d4d1_62%,#e3d5cf_76%,#e0d3d0_82%,#d6d5d5_90%,#dcd2d0_96%,#d6d4d3_100%)]">
    <svg width="21" height="21" viewBox="0 0 21 21" className="ml-[20px]" fill="#000">
      <path d="M0 3l8.500-1.300V10H0zM9.500 1.500L20.500 0v10h-11zM0 11h8.500v8.300L0 18zM9.500 11h11v10l-11-1.500z" />
    </svg>
    <div className="ml-[20px] flex h-[49px] w-[428px] items-center bg-white text-[19px] text-[#222]">
      <svg width="21" height="21" viewBox="0 0 21 21" fill="none" stroke="#222" strokeWidth="1.500" className="ml-[14px]">
        <circle cx="13" cy="7.500" r="6.300" />
        <path d="M8.500 12L1 20" />
      </svg>
      <span className="ml-[14px] leading-[24px]">在这里输入你要搜索的内容</span>
    </div>
    <svg width="20" height="20" viewBox="0 0 20 20" fill="none" className="ml-[21px]"><circle cx="10" cy="10" r="8.500" stroke="#111" strokeWidth="2.600" /></svg>
    <svg width="22" height="22" viewBox="0 0 22 22" fill="none" stroke="#111" strokeWidth="1.300" className="ml-[39px]">
      <path d="M1 1v3h13V1M1 7h13v8.500H1zM1 21v-3h13v3M19.500 1v4M19.500 12v9" />
      <rect x="18" y="7" width="3" height="3" fill="#111" stroke="none" />
    </svg>
    <div className="w-[22px]" />
    <App_ w="w-[62px]">
      <svg width="28" height="26" viewBox="0 0 28 26">
        <path d="M0 1h12l1 4H0z" fill="#dfa013" />
        <path d="M0 5h13l2-2h12.500v20H0z" fill="#fbd15c" />
        <path d="M5 24V13.500c0-1 .5-1.500 1.500-1.500h15c1 0 1.500.5 1.500 1.500V24h-4.500v-6h-9v6z" fill="#3d96df" />
      </svg>
    </App_>
    <App_ w="w-[62px]">
      <svg width="30" height="30" viewBox="0 0 30 30"><circle cx="15" cy="15" r="13.500" fill="#2e90ee" stroke="#e9f2fb" strokeWidth="1.500" /><path d="M12 7.500v10c0 1 .5 1.500 1.500 1.500h7" stroke="#fff" strokeWidth="3.600" fill="none" /></svg>
    </App_>
    <App_ w="w-[62px]">
      <svg width="30" height="25" viewBox="0 0 30 25"><path d="M0 9L15 0l15 9v16H0z" fill="#403c3b" /><path d="M1.500 9h27L17.500 14l7 6.500L1.500 9.500z" fill="#e4d8d1" /></svg>
    </App_>
    <App_ w="w-[62px]" bar="w-[51px]">
      <svg width="26" height="27" viewBox="0 0 26 27">
        <path d="M0.500 12.500C1.500 4.500 7 0.500 13 0.500c8 0 12 5.500 12 12v3H9c.5 4.500 4 6 8 6 2.500 0 5-.7 7-1.800v5c-2.500 1.400-5 2-8.500 2C8.500 26.700 4 22.500 4 16.500c0-4 2-7.500 5.500-9C6 8 2.500 9.500 0.500 12.500zM9.200 11h9.500c0-3-1.700-4.800-4.500-4.800-2.500 0-4.500 1.800-5 4.800z" fill="#0078d7" fillRule="evenodd" />
      </svg>
    </App_>
    <App_ w="w-[62px]" bar="w-[51px] border-r-[10px] border-[#62a7e4]">
      <svg width="30" height="29" viewBox="0 0 30 29">
        <path d="M3 0h24l3 11H0z" fill="#25b6ee" />
        <rect y="10.500" width="30" height="6" fill="#0f89c4" />
        <rect y="16.500" width="30" height="6.500" fill="#e05a38" />
        <rect y="23" width="30" height="6" fill="#58bd2c" />
        <rect x="12" width="6" height="29" fill="#9c4a25" />
        <rect x="10.500" y="13.500" width="9" height="7" fill="#8a3f22" stroke="#f0dccb" strokeWidth="1.400" />
        <path d="M15 13v4" stroke="#f0dccb" strokeWidth="2" />
      </svg>
    </App_>
    <App_ w="w-[62px]" bar="w-[51px]">
      <svg width="27" height="27" viewBox="0 0 27 27"><path d="M0 0h27v27H0z" fill="#000" /><path d="M1.500 1.500h24v17l-6-7-3.500 6L10 7l-8.500 12z" fill="#e9dcd5" /><path d="M14.500 14l3 7" stroke="#e9dcd5" /></svg>
    </App_>
    <App_ w="w-[61px]" bar="w-[61px]" active>
      <svg width="29" height="29" viewBox="0 0 29 29">
        <path d="M3.500 0.800h24.700V28H0.800V4z" fill="#dce8f8" stroke="#5c80b8" strokeWidth="1.300" />
        <path d="M14 20l12-6 2 13H15z" fill="#fff" stroke="#9db6de" />
        <path d="M20 15h7V9z" fill="#3f78cd" />
        <path d="M3 5h5.500l1 9 2.500-9h3.500l1 9 2-9h4.500L18 21h-4.200l-1-7.500L10.500 21h-4z" fill="#123f9f" />
      </svg>
    </App_>
    <div className="flex-1" />
    <div className="flex h-[21px] w-[20px] items-center justify-center border border-[#777] bg-white text-[16px] leading-[18px] text-black">拼</div>
    <svg width="48" height="28" viewBox="0 0 48 28" className="mb-[3px] ml-[35px]" fill="none">
      <path d="M2.500 5.500h40v5h4v8h-4v7h-40z" fill="#f7f7f7" stroke="#777" />
      <rect x="5" y="8" width="36" height="16" fill="#9a9a9a" />
      <rect x="5" y="8" width="23" height="16" fill="#169a45" />
      <text x="10" y="20.500" fontSize="12.500" fill="#fff">65%</text>
      <circle cx="41" cy="6" r="4.800" fill="#ec6060" stroke="#fff" strokeWidth="0.600" />
    </svg>
    <svg width="140" height="30" viewBox="0 0 140 30" fill="none" className="ml-[10px]">
      <path d="M4 20l8-8.500 8 8.500" stroke="#111" strokeWidth="1.400" />
      <circle cx="41.500" cy="14.500" r="8.500" fill="#1c63a8" stroke="#fff" strokeWidth="1.500" strokeDasharray="2 1.200" />
      <path d="M36.500 11l3 1 2 1.500 2-1.500 3-1-1.500 3 1.500 4-5-1.500-5 1.500 1.500-4z" fill="#fff" />
      <circle cx="41.500" cy="14.500" r="2" fill="#1c63a8" />
      <path d="M63.500 10.500h16v11h-16zM80 13.500h1.500v5H80" stroke="#111" strokeWidth="1.400" />
      <path d="M65 12h8l-3 8h-5z" fill="#111" />
      <path d="M95 21c0-6 6-12.500 14-12.500M99 22c0-5 4-9.500 10-9.500M103 22.500c0-3 2-6 6-6" stroke="#333" strokeWidth="1.300" />
      <circle cx="108" cy="21.500" r="1.800" fill="#111" />
      <path d="M122 12h3l5-4v14l-5-4h-3z" stroke="#111" strokeWidth="1.300" />
      <path d="M132 12c1.500 2 1.500 4.500 0 6.500M135 10c3 3.500 3 7.500 0 11" stroke="#333" strokeWidth="1.300" />
      <path d="M137.500 7c4 5 4 11 0 16" stroke="#999" />
    </svg>
    <div className="mb-[2px] ml-[10px] flex w-[86px] flex-col items-center text-[15.500px] leading-[22px] text-black">
      <span>23:02</span>
      <span>2020/2/15</span>
    </div>
    <svg width="36" height="36" viewBox="0 0 36 36" fill="none" className="ml-[17px]">
      <path d="M2 6h20v14H9v4l-4-4H2z" fill="#000" />
      <path d="M6 10.500h12M6 14.500h9" stroke="#eee" strokeWidth="1.300" />
      <rect x="9" y="15" width="24" height="19" rx="9.500" fill="#dcd6d4" stroke="#777" />
      <text x="12.500" y="30" fontSize="15" className="font-bold" fill="#000">12</text>
    </svg>
    <div className="ml-[11px] h-[50px] w-[6px] border-l border-[#a5a5a5]" />
  </div>
);

export default function App() {
  return (
    <div className={`relative flex h-[1080px] w-[1920px] flex-col overflow-hidden bg-white ${ui}`}>
      <TitleArea />
      <Ribbon />
      <div className="flex h-[824px] shrink-0 overflow-hidden bg-gradient-to-b from-[#cdd1d6] to-[#b8bbc0]">
        <LeftRuler />
        <div className="flex flex-1 flex-col overflow-hidden">
          <div className="ml-[439px] mt-[8px] flex h-[17px] w-[900px] shrink-0 items-center gap-[6px] border border-[#868b93] pl-[2px] font-['Liberation_Sans',sans-serif] text-[13px] text-[#4a4a4a]">
            <span className="h-[6px] w-px bg-[#555]" />
            <span className="-mx-[2px]">8</span>
            <span className="h-[6px] w-px bg-[#555]" />
            <span className="ml-[11px] h-[6px] w-px bg-[#555]" />
            <span className="-mx-[1px]">6</span>
          </div>
          <Page />
        </div>
        <ScrollColumn />
      </div>
      <StatusBar />
      <Taskbar />
      <FieldDialog />
      <div className="absolute left-[1638px] top-[1051px] whitespace-nowrap font-['Liberation_Sans',sans-serif] text-[16px] leading-[20px] text-white/70 [text-shadow:1px_1px_1px_rgba(0,0,0,0.25)]">
        https://blog.csdn.net/weixin_45704714
      </div>
    </div>
  );
}
